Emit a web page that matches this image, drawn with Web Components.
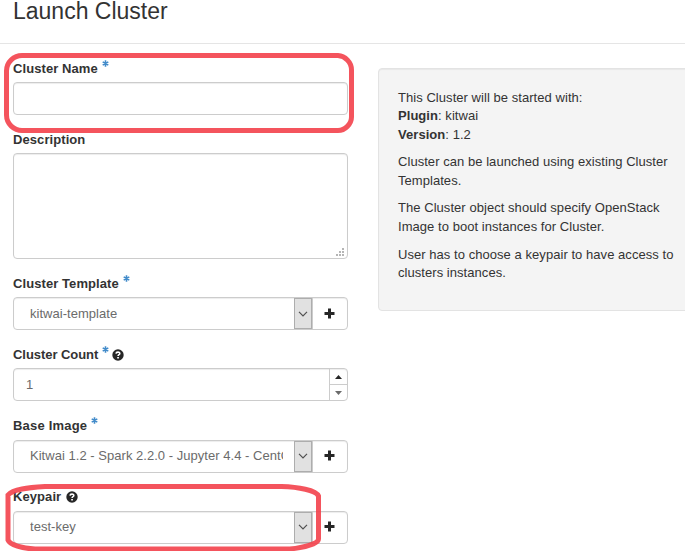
<!DOCTYPE html>
<html lang="en"><head><meta charset="utf-8"><title>Launch Cluster</title>
<style>html,body{margin:0;height:100%;overflow:hidden;background:#fff}body{font:13px/18.57px "Liberation Sans",Arial,sans-serif;color:#333}</style></head>
<body><launch-dialog></launch-dialog>
<script>
function define(name, html) {
  customElements.define(name, class extends HTMLElement {
    constructor() {
      super();
      const t = document.createElement('template');
      t.innerHTML = html;
      this.attachShadow({mode: 'open'}).append(t.content.cloneNode(true));
    }
  });
}
define('required-mark', `<style>:host{display:inline-block;width:7px;height:7px;margin:0 0 0 4px;vertical-align:6px;line-height:0}svg{display:block}</style>
<svg width="7" height="7" viewBox="0 0 7 7" stroke="#428bca" stroke-width="1.6"><path d="M3.5 .2v6.600M.7 1.900l5.600 3.200M.7 5.100l5.600-3.200"/></svg>`);
define('help-icon', `<style>:host{display:inline-block;width:12px;height:12px;vertical-align:-2px;margin-left:3px;line-height:0}:host(.solo){margin-left:5px}svg{display:block}</style>
<svg width="12" height="12" viewBox="0 0 12 12"><circle cx="6" cy="6" r="5.700" fill="#262626"/><path d="M4 4.600C4.200 2.600 7.800 2.600 7.800 4.500 7.800 5.700 6.100 5.600 6.100 7" fill="none" stroke="#fff" stroke-width="1.600"/><path d="M5.200 7.900h1.700v1.500H5.200z" fill="#fff"/></svg>`);
define('form-group', `<style>:host{display:block;padding-bottom:15.15px}.label{font-weight:700;height:18.5px;line-height:19px;margin-bottom:4.5px;white-space:nowrap;letter-spacing:var(--track,.08px)}
:host([tight]) .label{margin-top:-.4px;margin-bottom:4.9px}</style>
<div class="label"><slot name="label"></slot></div><slot></slot>`);
define('text-box', `<style>:host{display:block;box-sizing:border-box;height:33px;border:1px solid #ccc;border-radius:4px;background:#fff;box-shadow:inset 0 1px 1px rgba(0,0,0,.075)}
:host([multiline]){height:105.65px;display:flex;align-items:flex-end;justify-content:flex-end;padding:0 3px 2px 0}svg{display:none}:host([multiline]) svg{display:block}</style>
<svg width="8" height="8" fill="#b5b5b5"><path d="M6 0h2v2H6zM3 3h2v2H3zM6 3h2v2H6zM0 6h2v2H0zM3 6h2v2H3zM6 6h2v2H6z"/></svg>`);
define('select-box', `<style>:host{display:flex;box-sizing:border-box;height:33px;border:1px solid #ccc;border-radius:4px;background:#fff;box-shadow:inset 0 1px 1px rgba(0,0,0,.075);color:#6b6b6b}
.v{flex:1;overflow:hidden;white-space:nowrap;margin:6.6px 11px 0 16px;min-width:0;letter-spacing:.03px}
.a{box-sizing:border-box;width:18px;border:1px solid #adadad;background:#e1e1e1;display:grid;place-items:center}
.p{box-sizing:border-box;width:35px;border-left:1px solid #ccc;display:grid;place-items:center}svg{display:block}.p svg{margin:0 1px 1px 0}</style>
<div class="v"><slot></slot></div>
<div class="a"><svg width="10" height="6" viewBox="0 0 10 6"><path d="M1 .8l4 4 4-4" fill="none" stroke="#505050" stroke-width="1.2"/></svg></div>
<div class="p"><svg width="11" height="11" viewBox="0 0 11 11" fill="#262626"><path d="M4 .5h3V4h3.500v3H7v3.500H4V7H.5V4H4z"/></svg></div>`);
define('number-box', `<style>:host{display:flex;box-sizing:border-box;height:33px;border:1px solid #ccc;border-radius:4px;background:#fff;box-shadow:inset 0 1px 1px rgba(0,0,0,.075);color:#6b6b6b}
.v{flex:1;padding:6.6px 0 0 12px}.s{width:17px;display:flex;flex-direction:column;border-left:1px solid #ccc}.s div{flex:1;display:grid;place-items:center}.s div+div{border-top:1px solid #ccc}svg{display:block}</style>
<div class="v"><slot></slot></div><div class="s"><div><svg width="7" height="4"><path d="M0 4L3.500 0 7 4z" fill="#262626"/></svg></div><div><svg width="7" height="4"><path d="M0 0h7L3.500 4z" fill="#6b6b6b"/></svg></div></div>`);
define('info-panel', `<style>:host{display:block;box-sizing:border-box;width:330px;height:243px;padding:19.6px 19px;border:1px solid #e3e3e3;border-radius:4px;background:#f4f4f4;box-shadow:inset 0 1px 1px rgba(0,0,0,.05);letter-spacing:.05px}
p{margin:0 0 9px;white-space:nowrap}</style>
<p>This Cluster will be started with:<br><b>Plugin</b>: kitwai<br><b>Version</b>: 1.2</p><p>Cluster can be launched using existing Cluster<br>Templates.</p><p>The Cluster object should specify OpenStack<br>Image to boot instances for Cluster.</p><p>User has to choose a keypair to have access to<br>clusters instances.</p>`);
define('mark-overlay', `<style>:host{position:absolute;inset:0;pointer-events:none}svg{display:block}</style>
<svg width="685" height="551" fill="none" stroke="#f3414b" stroke-opacity=".9" stroke-width="5"><path d="M22 55.500H338C345 56 351.500 62 351.500 70V117C351.500 124 345 130.500 338 130.500H22C14 130.500 6.500 124 6.500 115V71C6.500 62 14 55.500 22 55.500z"/><path d="M281.500 486.500H45C28 487.500 13 489 8 495V540C10 545 22 548.500 35 549H290C303 547.500 318.500 544 318.500 539V496C316 490 298 487 281.500 486.500z"/></svg>`);
define('launch-dialog', `<style>:host{display:block;position:relative;width:685px;height:551px;overflow:hidden}
header{box-sizing:border-box;height:44px;border-bottom:1px solid #e5e5e5;padding-left:13px}h3{margin:0;font-weight:400;font-size:23px;line-height:22px}
main{display:flex;gap:30px;padding:15.3px 0 0 13px}.f{width:335px;flex:none}info-panel{margin-top:8.7px;flex:none}
.count{--track:-.05px}.base{--track:.2px}</style>
<header><h3>Launch Cluster</h3></header>
<main><div class="f">
<form-group><span slot="label">Cluster Name<required-mark></required-mark></span><text-box></text-box></form-group>
<form-group><span slot="label">Description</span><text-box multiline></text-box></form-group>
<form-group><span slot="label">Cluster Template<required-mark></required-mark></span><select-box>kitwai-template</select-box></form-group>
<form-group class="count"><span slot="label">Cluster Count<required-mark></required-mark><help-icon></help-icon></span><number-box>1</number-box></form-group>
<form-group tight class="base"><span slot="label">Base Image<required-mark></required-mark></span><select-box>Kitwai 1.2 - Spark 2.2.0 - Jupyter 4.4 - CentOS 7</select-box></form-group>
<form-group tight><span slot="label">Keypair<help-icon class="solo"></help-icon></span><select-box>test-key</select-box></form-group>
</div><info-panel></info-panel></main><mark-overlay></mark-overlay>`);
</script></body></html>
